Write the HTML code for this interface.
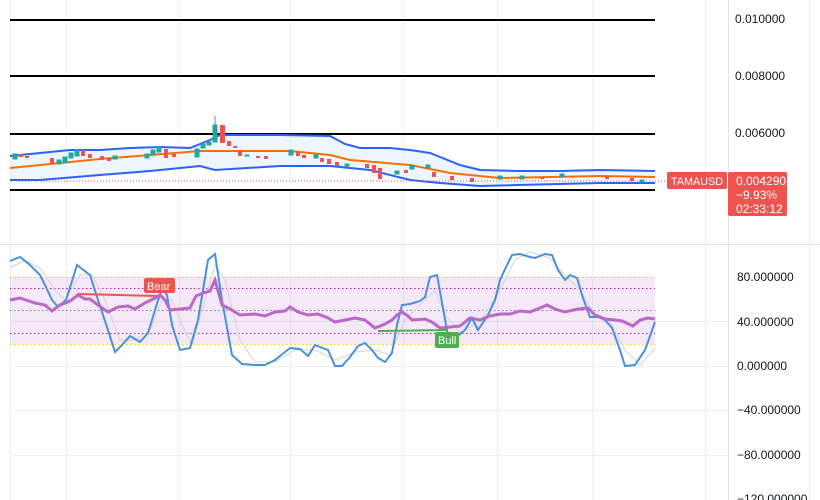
<!DOCTYPE html>
<html><head><meta charset="utf-8"><style>
body{margin:0;width:820px;height:500px;background:#fff;overflow:hidden;font-family:"Liberation Sans",sans-serif}
svg{position:absolute;left:0;top:0}
.lbl{font-size:12px;fill:#131722}
</style></head><body>
<svg width="820" height="500" viewBox="0 0 820 500">
<g stroke="#eef0f4" stroke-width="1">
<line x1="10.5" y1="0" x2="10.5" y2="500"/>
<line x1="66.5" y1="0" x2="66.5" y2="500"/>
<line x1="179.5" y1="0" x2="179.5" y2="500"/>
<line x1="290.5" y1="0" x2="290.5" y2="500"/>
<line x1="403.5" y1="0" x2="403.5" y2="500"/>
<line x1="497.5" y1="0" x2="497.5" y2="500"/>
<line x1="592.5" y1="0" x2="592.5" y2="500"/>
<line x1="705.5" y1="0" x2="705.5" y2="500"/>
<line x1="809.5" y1="0" x2="809.5" y2="500"/>
<line x1="10" y1="321.5" x2="728" y2="321.5"/>
<line x1="10" y1="366.5" x2="728" y2="366.5"/>
<line x1="10" y1="410.5" x2="728" y2="410.5"/>
<line x1="10" y1="455.5" x2="728" y2="455.5"/>
</g>
<line x1="0" y1="244.5" x2="820" y2="244.5" stroke="#e0e3eb"/>
<line x1="728.5" y1="0" x2="728.5" y2="500" stroke="#e0e3eb"/>
<g stroke="#000" stroke-width="2">
<line x1="10" y1="20" x2="655" y2="20"/>
<line x1="10" y1="76" x2="655" y2="76"/>
<line x1="10" y1="134" x2="655" y2="134"/>
<line x1="10" y1="190" x2="655" y2="190"/>
</g>
<polygon fill="#e3f0fc" opacity="0.6" points="10,156 40,153 70,150 100,150 130,148 160,147 190,148 210,140 220,135 280,135 330,136 345,144 360,148 390,148 410,150 430,153 460,165 480,170 520,171 560,171 600,170 655,171 655,183 600,183 480,186 440,183 410,180 370,170 330,166 280,166 215,170 200,166 150,171 100,175 40,180 10,180"/>
<polyline fill="none" stroke="#2962ff" stroke-width="2" points="10,156 40,153 70,150 100,150 130,148 160,147 190,148 210,140 220,135 280,135 330,136 345,144 360,148 390,148 410,150 430,153 460,165 480,170 520,171 560,171 600,170 655,171"/>
<polyline fill="none" stroke="#2962ff" stroke-width="2" points="10,180 40,180 100,175 150,171 200,166 215,170 280,166 330,166 370,170 410,180 440,183 480,186 600,183 655,183"/>
<polyline fill="none" stroke="#ff6d00" stroke-width="2" points="10,168 100,159 200,151 290,151 330,155 350,160 410,165 450,173 500,178 600,176 655,177"/>
<line x1="10" y1="181" x2="667" y2="181" stroke="#ef5350" stroke-dasharray="1,2"/>
<g fill="#26a69a" stroke="#26a69a">
<rect x="13" y="154" width="4" height="5"/><rect x="57" y="160" width="4" height="4"/><rect x="63" y="157" width="4" height="6"/><rect x="69" y="153" width="4" height="5"/><rect x="75" y="150" width="4" height="6"/>
<rect x="113" y="156" width="4" height="3"/><rect x="145" y="154" width="4" height="4"/><rect x="151" y="150" width="4" height="5"/><rect x="157" y="147" width="4" height="5"/>
<rect x="195" y="149" width="4" height="8"/><rect x="201" y="144" width="4" height="4"/><rect x="207" y="142" width="4" height="3"/><rect x="213" y="125" width="4" height="17"/><line x1="215" y1="116" x2="215" y2="125"/>
<rect x="245" y="155" width="4" height="1"/><rect x="289" y="150" width="4" height="5"/><rect x="314" y="155" width="4" height="3"/>
<rect x="345" y="164" width="4" height="2"/><rect x="395" y="171" width="4" height="3"/><rect x="410" y="165" width="4" height="4"/><rect x="426" y="165" width="4" height="3"/>
<rect x="498" y="176" width="4" height="3"/><rect x="520" y="176" width="4" height="3"/><rect x="560" y="174" width="4" height="3"/><rect x="640" y="180" width="4" height="2"/>
</g>
<g fill="#ef5350">
<rect x="19" y="154" width="4" height="3"/><rect x="25" y="156" width="4" height="2"/><rect x="50" y="158" width="4" height="5"/><rect x="81" y="150" width="4" height="6"/><rect x="88" y="154" width="4" height="4"/>
<rect x="100" y="156" width="4" height="4"/><rect x="107" y="158" width="4" height="3"/><rect x="164" y="149" width="4" height="9"/><rect x="172" y="154" width="4" height="3"/>
<rect x="220" y="125" width="5" height="18"/><rect x="227" y="141" width="4" height="5"/><rect x="233" y="146" width="4" height="2"/><rect x="238" y="150" width="4" height="6"/>
<rect x="256" y="156" width="4" height="2"/><rect x="264" y="156" width="4" height="3"/><rect x="296" y="152" width="4" height="4"/><rect x="302" y="155" width="4" height="3"/>
<rect x="320" y="158" width="4" height="4"/><rect x="327" y="159" width="4" height="5"/><rect x="335" y="162" width="4" height="4"/><rect x="365" y="164" width="4" height="4"/>
<rect x="372" y="165" width="4" height="8"/><rect x="378" y="168" width="4" height="11"/><rect x="404" y="170" width="4" height="3"/><rect x="432" y="172" width="4" height="5"/>
<rect x="450" y="176" width="4" height="4"/><rect x="470" y="178" width="4" height="4"/><rect x="540" y="177" width="4" height="2"/><rect x="605" y="176" width="4" height="3"/><rect x="630" y="178" width="4" height="3"/>
</g>
<g class="lbl"><text x="735" y="23">0.010000</text><text x="735" y="80">0.008000</text><text x="735" y="137">0.006000</text>
<text x="737" y="281">80.000000</text><text x="737" y="326">40.000000</text><text x="737" y="370">0.000000</text>
<text x="737" y="414">−40.000000</text><text x="737" y="459">−80.000000</text><text x="737" y="503">−120.000000</text></g>
<rect x="667" y="172" width="60" height="17" rx="2" fill="#ef5350"/>
<text x="697" y="185" font-size="11" fill="#fff" text-anchor="middle" textLength="52" lengthAdjust="spacingAndGlyphs">TAMAUSD</text>
<rect x="728" y="172" width="59" height="44" rx="2" fill="#ef5350"/>
<g font-size="12" fill="#fff"><text x="736" y="185">0.004290</text><text x="736" y="199">−9.93%</text><text x="736" y="213">02:33:12</text></g>
<rect x="10" y="277" width="645" height="67" fill="#9c27b0" opacity="0.1"/>
<g stroke-width="1" stroke-dasharray="1.5,2.5">
<line x1="10" y1="277.5" x2="655" y2="277.5" stroke="#f5c518"/>
<line x1="10" y1="344.5" x2="655" y2="344.5" stroke="#f5c518"/>
<line x1="10" y1="288.5" x2="655" y2="288.5" stroke="#9c27b0"/>
<line x1="10" y1="333.5" x2="655" y2="333.5" stroke="#9c27b0"/>
<line x1="10" y1="310.5" x2="655" y2="310.5" stroke="#787b86"/>
</g>
<polyline fill="none" stroke="#d1d4dc" stroke-width="1" points="10,268 25,260 40,268 55,290 65,300 80,275 92,275 105,300 120,340 135,340 150,330 162,300 172,300 182,325 192,345 205,300 215,265 225,280 240,340 255,362 275,362 295,350 315,350 335,360 355,352 375,350 390,355 405,320 425,300 435,290 445,315 460,332 480,322 500,290 515,260 530,252 550,258 565,275 580,290 595,315 610,322 625,350 640,365 655,348"/>
<polyline fill="none" stroke="#4a90d9" stroke-width="2" points="10,261 20,257 30,265 40,275 45,285 52,300 58,307 66,300 77,265 90,275 98,300 108,330 115,352 122,345 130,336 140,342 148,333 155,310 162,288 167,295 172,325 180,350 190,348 198,320 208,260 215,254 222,300 232,355 242,364 255,365 265,365 275,360 290,348 300,349 308,356 315,345 320,347 328,350 335,366 342,366 350,357 358,346 365,343 372,350 378,358 385,362 392,353 397,325 402,305 410,304 420,301 425,297 430,277 437,275 443,308 448,336 455,338 465,330 472,318 478,330 488,315 495,300 500,280 507,265 512,255 520,254 530,257 535,258 545,254 552,255 558,270 565,280 570,275 577,278 583,298 590,317 598,317 605,320 612,328 620,350 625,366 635,365 645,350 655,322"/>
<polyline fill="none" stroke="#ef5350" stroke-width="2" points="77,294 158,296"/>
<polyline fill="none" stroke="#4caf50" stroke-width="2" points="378,331 448,330"/>
<polyline fill="none" stroke="#ba68c8" stroke-width="3" points="10,300 20,298 35,303 45,305 52,311 60,305 70,301 78,295 85,299 90,299 98,305 108,312 118,307 128,306 135,309 145,303 155,298 160,295 165,300 170,310 180,309 190,308 196,296 203,293 210,291 215,280 222,305 230,309 240,315 255,314 265,316 275,312 285,311 290,307 298,312 308,315 318,314 328,318 335,322 345,320 355,318 365,320 375,328 385,324 392,320 397,315 402,312 408,316 412,320 425,319 432,322 440,328 450,327 460,326 470,318 480,320 490,316 500,314 510,314 520,311 530,312 540,308 547,305 555,309 565,312 578,309 588,308 595,315 605,319 615,320 622,321 633,326 640,320 648,318 655,319"/>
<rect x="144" y="278" width="31" height="15" rx="2" fill="#ef5350"/>
<text x="147" y="290" font-size="11" fill="#fff">Bear</text>
<rect x="435" y="332" width="24" height="16" rx="2" fill="#4caf50"/>
<text x="438" y="344" font-size="11" fill="#fff">Bull</text>
</svg>
</body></html>
